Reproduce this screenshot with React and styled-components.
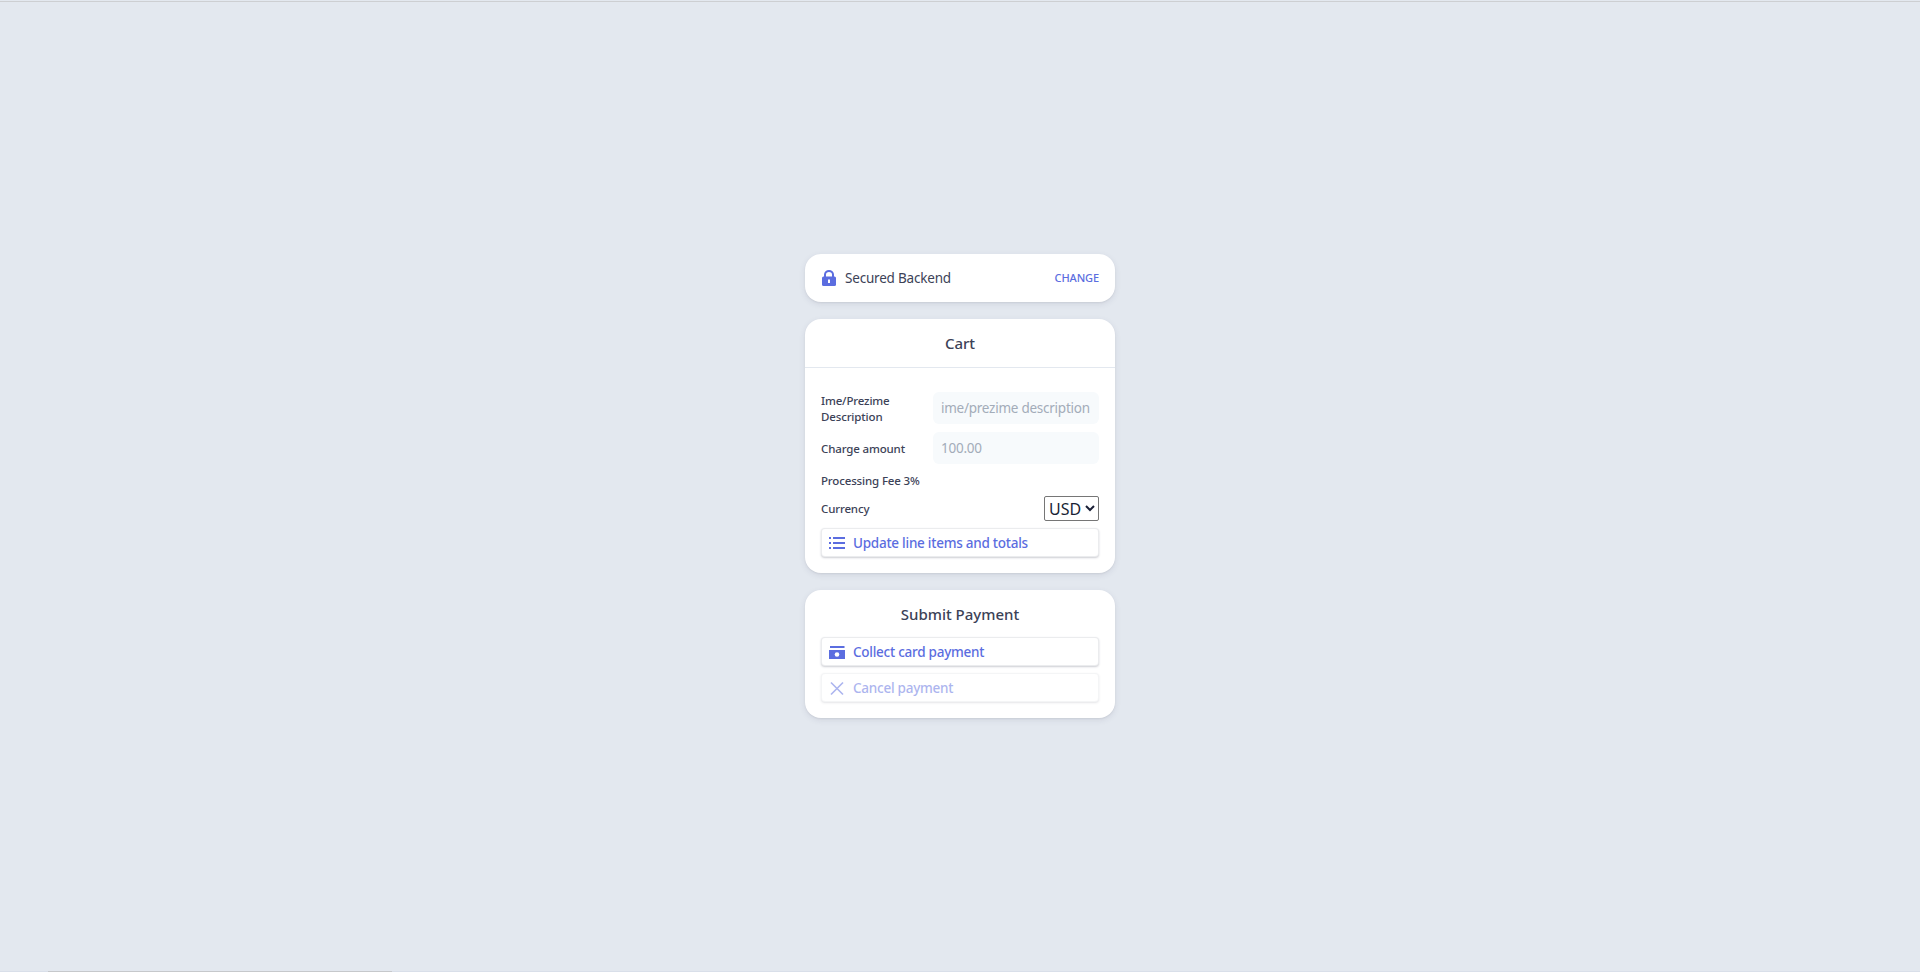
import React from 'react';
import styled, { createGlobalStyle } from 'styled-components';

const accent = '#5b6de0';
const ink = '#3c4257';

const GlobalStyle = createGlobalStyle`
  html, body {
    margin: 0;
    height: 100%;
    background: #e3e8ef;
    overflow: hidden;
  }
  body {
    font-family: "Noto Sans", "Open Sans", sans-serif;
  }
`;

const Page = styled.div`
  height: 972px;
  display: flex;
  flex-direction: column;
  box-sizing: border-box;
  padding-top: 1px;
`;

const TopRule = styled.div`
  height: 1px;
  background: #cdcfd2;
`;

const Center = styled.main`
  flex: 1;
  display: flex;
  flex-direction: column;
  align-items: center;
  justify-content: center;
  gap: 17px;
  padding-bottom: 1px;
`;

const BottomTrack = styled.div`
  height: 1px;
  background: #d9dfe9;
`;

const BottomThumb = styled.div`
  height: 1px;
  width: 344px;
  margin-left: 48px;
  background: #c6c8cb;
`;

const Card = styled.section`
  width: 310px;
  background: #fff;
  border-radius: 16px;
  box-shadow: 0 2px 6px rgba(50, 50, 93, 0.1), 0 1px 2px rgba(0, 0, 0, 0.06);
  box-sizing: border-box;
`;

const BackendRow = styled.div`
  height: 48px;
  padding: 0 16px;
  display: flex;
  align-items: center;
  justify-content: space-between;
`;

const BackendLabel = styled.div`
  display: flex;
  align-items: center;
  gap: 8px;
  font-size: 13.5px;
  letter-spacing: -0.2px;
  color: ${ink};
`;

const ChangeLink = styled.a`
  font-size: 11px;
  font-weight: 500;
  letter-spacing: -0.1px;
  color: ${accent};
  padding-bottom: 1px;
`;

const CardTitle = styled.h2`
  margin: 0;
  height: 48px;
  box-sizing: content-box;
  display: flex;
  align-items: center;
  justify-content: center;
  font-size: 15px;
  font-weight: 500;
  color: ${ink};
  border-bottom: 1px solid #e3e8ef;
`;

const CartBody = styled.div`
  padding: 24px 16px 16px;
  display: flex;
  flex-direction: column;
`;

const FieldRow = styled.div`
  display: grid;
  grid-template-columns: 112px 1fr;
  grid-template-rows: 32px;
  align-items: center;
  margin-bottom: 8px;
`;

const FieldLabel = styled.label`
  font-size: 11.5px;
  line-height: 16px;
  font-weight: 500;
  letter-spacing: -0.15px;
  color: ${ink};
  padding-top: 1px;
`;

const TextField = styled.input`
  height: 32px;
  width: 100%;
  box-sizing: border-box;
  padding: 0 8px;
  border: 0;
  border-radius: 6px;
  background: #f7fafc;
  font: inherit;
  font-size: 13.5px;
  letter-spacing: -0.25px;
  color: ${ink};

  &::placeholder {
    color: #a3acb9;
    opacity: 1;
  }
`;

const FeeRow = styled.div`
  font-size: 11.5px;
  line-height: 16px;
  font-weight: 500;
  letter-spacing: -0.15px;
  color: ${ink};
  margin: 1px 0 7px;
`;

const CurrencyRow = styled.div`
  display: flex;
  align-items: center;
  justify-content: space-between;
  margin-bottom: 7px;
`;

const CurrencySelect = styled.select`
  width: 55px;
  height: 25px;
  font-family: inherit;
  font-size: 16px;
  color: #1a1f36;
  background: #fff;
  border: 1px solid #767676;
  border-radius: 2px;
  padding: 0;
`;

const ActionButton = styled.button`
  width: 100%;
  height: 29px;
  display: flex;
  align-items: center;
  gap: 8px;
  padding: 0 7px;
  box-sizing: border-box;
  background: #fff;
  border: 1px solid rgba(60, 66, 87, 0.1);
  border-radius: 4px;
  box-shadow: 0 1px 2px rgba(60, 66, 87, 0.26);
  font: inherit;
  font-size: 13.5px;
  font-weight: 500;
  letter-spacing: -0.25px;
  color: ${accent};
  text-align: left;
  opacity: ${(p) => (p.disabled ? 0.5 : 1)};
`;

const SubmitBody = styled.div`
  padding: 0 16px 16px;
  display: flex;
  flex-direction: column;
  gap: 7px;
`;

const SubmitTitle = styled(CardTitle)`
  border-bottom: 0;
  height: 47px;
`;

const LockIcon = () => (
  <svg width="16" height="16" viewBox="0 0 16 16" fill={accent}>
    <rect x="1" y="6.500" width="14" height="9.500" rx="1.500" />
    <path d="M4 7V4.500a4 3.500 0 0 1 8 0V7" fill="none" stroke={accent} strokeWidth="2" />
    <rect x="7" y="9.500" width="2" height="3.500" fill="#fff" />
  </svg>
);

const ListIcon = () => (
  <svg width="16" height="14" viewBox="0 0 16 14" fill={accent}>
    <rect x="0" y="1" width="2" height="2" />
    <rect x="4" y="1" width="12" height="2" />
    <rect x="0" y="6" width="2" height="2" />
    <rect x="4" y="6" width="12" height="2" />
    <rect x="0" y="11" width="2" height="2" />
    <rect x="4" y="11" width="12" height="2" />
  </svg>
);

const PaymentIcon = () => (
  <svg width="16" height="14" viewBox="0 0 16 14" fill={accent}>
    <rect x="1" y="1" width="14.500" height="2" />
    <rect x="0" y="5" width="16" height="9" />
    <circle cx="8" cy="9.500" r="2.300" fill="#fff" />
  </svg>
);

const CloseIcon = () => (
  <svg width="16" height="16" viewBox="0 0 16 16" fill="none" stroke={accent} strokeWidth="1.600">
    <path d="M2 2.500l12 12M14 2.500l-12 12" />
  </svg>
);

export default function App() {
  return (
    <>
      <GlobalStyle />
      <Page>
        <TopRule />
        <Center>
          <Card>
            <BackendRow>
              <BackendLabel>
                <LockIcon />
                Secured Backend
              </BackendLabel>
              <ChangeLink>CHANGE</ChangeLink>
            </BackendRow>
          </Card>
          <Card>
            <CardTitle>Cart</CardTitle>
            <CartBody>
              <FieldRow>
                <FieldLabel>Ime/Prezime Description</FieldLabel>
                <TextField placeholder="ime/prezime description" />
              </FieldRow>
              <FieldRow>
                <FieldLabel>Charge amount</FieldLabel>
                <TextField placeholder="100.00" />
              </FieldRow>
              <FeeRow>Processing Fee 3%</FeeRow>
              <CurrencyRow>
                <FieldLabel>Currency</FieldLabel>
                <CurrencySelect defaultValue="USD">
                  <option>USD</option>
                  <option>EUR</option>
                </CurrencySelect>
              </CurrencyRow>
              <ActionButton>
                <ListIcon />
                Update line items and totals
              </ActionButton>
            </CartBody>
          </Card>
          <Card>
            <SubmitTitle>Submit Payment</SubmitTitle>
            <SubmitBody>
              <ActionButton>
                <PaymentIcon />
                Collect card payment
              </ActionButton>
              <ActionButton disabled>
                <CloseIcon />
                Cancel payment
              </ActionButton>
            </SubmitBody>
          </Card>
        </Center>
        <BottomTrack>
          <BottomThumb />
        </BottomTrack>
      </Page>
    </>
  );
}
